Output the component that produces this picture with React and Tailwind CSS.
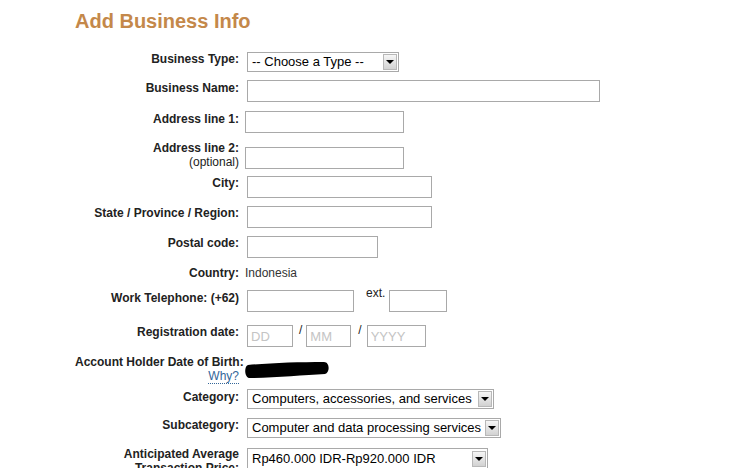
// App.jsx
import React from "react";

const font = { fontFamily: '"Liberation Sans", Arial, sans-serif' };

const Label = ({ children, className = "" }) => (
  <div
    className={`w-[164px] shrink-0 text-right font-bold text-[12px] leading-[14px] text-[#222] whitespace-nowrap ${className}`}
  >
    {children}
  </div>
);

const TextBox = ({ className = "", placeholder }) => (
  <input
    type="text"
    placeholder={placeholder}
    className={`h-[22px] border border-[#a9a9a9] bg-white px-[3px] text-[13px] text-black outline-none placeholder:text-[#c4c4c4] ${className}`}
  />
);

// looks like an old windows select box
const FakeSelect = ({ className = "", children }) => (
  <div
    className={`h-[20px] border border-[#a9a9a9] bg-white flex items-center justify-between pl-[4px] pr-[1px] text-[13px] leading-[16px] text-black ${className}`}
  >
    <span className="whitespace-nowrap">{children}</span>
    <span className="w-[14px] h-[16px] border border-[#b8b8b8] bg-linear-to-b from-[#f6f6f6] to-[#d2d2d2] flex items-center justify-center">
      <span className="w-0 h-0 border-x-[4px] border-x-transparent border-t-[4px] border-t-black" />
    </span>
  </div>
);

const Row = ({ className = "", children }) => (
  <div className={`flex items-start gap-2 ${className}`}>{children}</div>
);

export default function App() {
  return (
    <div className="w-full min-h-screen bg-white pl-[75px] pt-[9px]" style={font}>
      {/* ================= TITLE ================= */}
      <h1 className="h-[24px] text-[20px] leading-[24px] font-bold text-[#c4884a]">
        Add Business Info
      </h1>

      <div className="mt-[19px]">
        <Row className="h-[28px]">
          <Label>Business Type:</Label>
          <FakeSelect className="w-[152px]">-- Choose a Type --</FakeSelect>
        </Row>

        <Row className="h-[31px]">
          <Label className="pt-[1px]">Business Name:</Label>
          <TextBox className="w-[353px]" />
        </Row>

        <Row className="h-[30px]">
          <Label className="pt-[1px]">Address line 1:</Label>
          <TextBox className="w-[159px] -ml-[2px]" />
        </Row>

        <Row className="h-[35px]">
          <Label>
            Address line 2:
            <div className="font-normal">(optional)</div>
          </Label>
          <TextBox className="w-[159px] -ml-[2px] mt-[6px]" />
        </Row>

        <Row className="h-[30px]">
          <Label>City:</Label>
          <TextBox className="w-[185px]" />
        </Row>

        <Row className="h-[30px]">
          <Label>State / Province / Region:</Label>
          <TextBox className="w-[185px]" />
        </Row>

        <Row className="h-[30px]">
          <Label>Postal code:</Label>
          <TextBox className="w-[131px]" />
        </Row>

        <Row className="h-[24px]">
          <Label>Country:</Label>
          <div className="-ml-[2px] text-[12px] leading-[14px] text-[#333]">Indonesia</div>
        </Row>

        <Row className="h-[35px]">
          <Label className="pt-[1px]">Work Telephone: (+62)</Label>
          <div className="flex items-start">
            <TextBox className="w-[107px]" />
            <span className="ml-[12px] -mt-[4px] text-[12px] leading-[14px] text-[#222]">ext.</span>
            <TextBox className="ml-[4px] w-[58px]" />
          </div>
        </Row>

        <Row className="h-[30px]">
          <Label>Registration date:</Label>
          <div className="flex items-start">
            <TextBox className="w-[46px]" placeholder="DD" />
            <span className="ml-[6px] -mt-[2px] text-[12px] leading-[14px] text-[#222]">/</span>
            <TextBox className="ml-[4px] w-[45px]" placeholder="MM" />
            <span className="ml-[7px] -mt-[2px] text-[12px] leading-[14px] text-[#222]">/</span>
            <TextBox className="ml-[5px] w-[59px]" placeholder="YYYY" />
          </div>
        </Row>

        <Row className="h-[34px]">
          <Label>
            Account Holder Date of Birth:
            <div>
              <span className="font-normal text-[#336699] border-b border-dotted border-[#336699]">
                Why?
              </span>
            </div>
          </Label>
          {/* blacked out value */}
          <svg width="86" height="16" viewBox="0 0 86 16" className="-ml-[3px] mt-[7px] shrink-0">
            <path
              d="M4 3 C25 1 55 0 80 0 C86 0 86 11 81 12 C60 13 30 16 6 16 C0 16 0 4 4 3 Z"
              fill="#000"
            />
          </svg>
        </Row>

        <Row className="h-[29px]">
          <Label className="pt-[1px]">Category:</Label>
          <FakeSelect className="w-[247px]">Computers, accessories, and services</FakeSelect>
        </Row>

        <Row className="h-[30px]">
          <Label>Subcategory:</Label>
          <FakeSelect className="w-[254px]">Computer and data processing services</FakeSelect>
        </Row>

        <Row className="h-[40px]">
          <Label className="-mt-[1px]">
            Anticipated Average
            <div>Transaction Price:</div>
          </Label>
          <FakeSelect className="w-[241px] h-[21px]">Rp460.000 IDR-Rp920.000 IDR</FakeSelect>
        </Row>
      </div>
    </div>
  );
}
